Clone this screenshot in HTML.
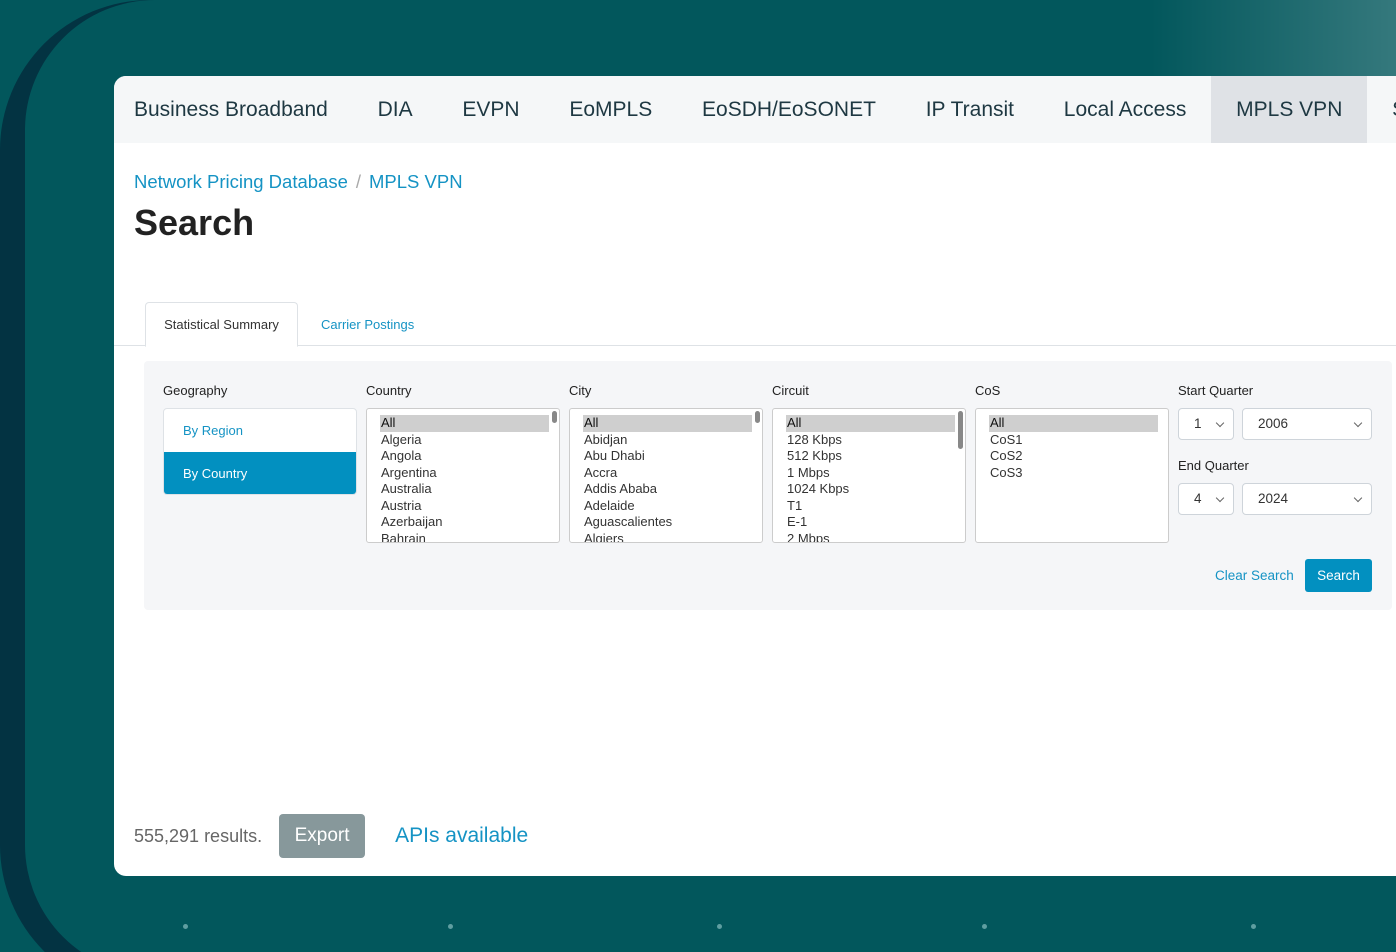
<!DOCTYPE html>
<html><head><style>
*{margin:0;padding:0;box-sizing:border-box}
html,body{width:1396px;height:952px;overflow:hidden}
body{background:#02575c;font-family:"Liberation Sans",sans-serif;position:relative}
.dark{position:absolute;left:0;top:0;width:1500px;height:995px;background:#033342;border-radius:150px}
.teal{position:absolute;left:25px;top:0;width:1500px;height:975px;background:#02575c;border-radius:130px}
.glow{position:absolute;left:1150px;top:0;width:246px;height:80px;background:linear-gradient(90deg,rgba(255,255,255,0),rgba(255,255,255,0.2))}
.dot{position:absolute;top:924px;width:5px;height:5px;border-radius:50%;background:#5f9ea1}
.card{position:absolute;left:114px;top:76px;width:1300px;height:800px;background:#fff;border-radius:12px 0 0 12px;overflow:hidden}
.nav{height:67px;background:#f5f7f8;display:flex;font-size:21px;color:#1e3842}
.nav div{padding:0 24.9px;line-height:67px;white-space:nowrap}
.nav div:first-child{padding-left:20px}
.nav .act{background:#dfe2e6}
.bc{position:absolute;left:20px;top:95px;font-size:18.5px;color:#1593c4}
.bc span{color:#aaa;margin:0 8px}
h1{position:absolute;left:20px;top:126px;font-size:36px;font-weight:bold;color:#222}
.tabs{position:absolute;left:0;top:226px;width:1300px;height:44px;border-bottom:1px solid #dee2e6}
.tab1{position:absolute;left:31px;top:0;width:153px;height:45px;border:1px solid #dee2e6;border-bottom:1px solid #fff;border-radius:4px 4px 0 0;font-size:13px;color:#333;text-align:center;line-height:43px;background:#fff}
.tab2{position:absolute;left:207px;top:0;font-size:13px;color:#1593c4;line-height:45px}
.panel{position:absolute;left:30px;top:285px;width:1248px;height:249px;background:#f5f6f8;border-radius:4px}
.lbl{position:absolute;font-size:13px;color:#222}
.geo{position:absolute;left:19px;top:47px;width:194px;height:87px;border:1px solid #dee2e6;border-radius:4px;background:#fff;overflow:hidden;font-size:13px}
.geo div{height:43px;line-height:43px;padding-left:19px;color:#1593c4}
.geo .on{background:#0290c0;color:#fff}
.lst{position:absolute;top:47px;width:194px;height:135px;border:1px solid #ccc;border-radius:3px;background:#fff;padding:6px 0 0 13px;font-size:13px;color:#333;line-height:16.5px;overflow:hidden}
.lst div:first-child{background:#cfcfcf;margin-right:10px;padding-left:1px;color:#111}
.lst div{padding-left:1px}
.lst .sb{position:absolute;right:2px;top:2px;width:5px;height:12px;background:#888;border-radius:3px;padding:0}
.sel{position:absolute;height:32px;border:1px solid #ced4da;border-radius:4px;background:#fff;font-size:13.5px;color:#333;line-height:30px;padding-left:15px}
.sel:after{content:"";position:absolute;right:10px;top:11px;width:5px;height:5px;border-right:1px solid #666;border-bottom:1px solid #666;transform:rotate(45deg)}
.btn{position:absolute;left:1161px;top:198px;width:67px;height:33px;background:#0290c0;border-radius:3px;color:#fff;font-size:13.5px;text-align:center;line-height:33px}
.clr{position:absolute;left:1071px;top:198px;line-height:33px;font-size:13.5px;color:#1593c4}
.foot{position:absolute;left:20px;top:738px;font-size:18px;color:#666;display:flex;align-items:center}
.exp{margin-left:17px;width:86px;height:44px;background:#87989b;border-radius:4px;color:#fff;font-size:19px;text-align:center;line-height:44px}
.api{margin-left:30px;font-size:21px;color:#1593c4}
</style></head><body>
<div class="dark"></div><div class="teal"></div><div class="glow"></div>
<div class="dot" style="left:183px"></div><div class="dot" style="left:448px"></div><div class="dot" style="left:717px"></div><div class="dot" style="left:982px"></div><div class="dot" style="left:1251px"></div>
<div class="card">
<div class="nav"><div>Business Broadband</div><div>DIA</div><div>EVPN</div><div>EoMPLS</div><div>EoSDH/EoSONET</div><div>IP Transit</div><div>Local Access</div><div class="act">MPLS VPN</div><div>Sites</div></div>
<div class="bc">Network Pricing Database<span>/</span>MPLS VPN</div>
<h1>Search</h1>
<div class="tabs"><div class="tab1">Statistical Summary</div><div class="tab2">Carrier Postings</div></div>
<div class="panel">
<div class="lbl" style="left:19px;top:22px">Geography</div>
<div class="lbl" style="left:222px;top:22px">Country</div>
<div class="lbl" style="left:425px;top:22px">City</div>
<div class="lbl" style="left:628px;top:22px">Circuit</div>
<div class="lbl" style="left:831px;top:22px">CoS</div>
<div class="lbl" style="left:1034px;top:22px">Start Quarter</div>
<div class="lbl" style="left:1034px;top:97px">End Quarter</div>
<div class="geo"><div>By Region</div><div class="on">By Country</div></div>
<div class="lst" style="left:222px"><div>All</div><div>Algeria</div><div>Angola</div><div>Argentina</div><div>Australia</div><div>Austria</div><div>Azerbaijan</div><div>Bahrain</div><div class="sb"></div></div>
<div class="lst" style="left:425px"><div>All</div><div>Abidjan</div><div>Abu Dhabi</div><div>Accra</div><div>Addis Ababa</div><div>Adelaide</div><div>Aguascalientes</div><div>Algiers</div><div class="sb"></div></div>
<div class="lst" style="left:628px"><div>All</div><div>128 Kbps</div><div>512 Kbps</div><div>1 Mbps</div><div>1024 Kbps</div><div>T1</div><div>E-1</div><div>2 Mbps</div><div class="sb" style="height:38px"></div></div>
<div class="lst" style="left:831px"><div>All</div><div>CoS1</div><div>CoS2</div><div>CoS3</div></div>
<div class="sel" style="left:1034px;top:47px;width:56px">1</div>
<div class="sel" style="left:1098px;top:47px;width:130px">2006</div>
<div class="sel" style="left:1034px;top:122px;width:56px">4</div>
<div class="sel" style="left:1098px;top:122px;width:130px">2024</div>
<div class="clr">Clear Search</div><div class="btn">Search</div>
</div>
<div class="foot">555,291 results.<div class="exp">Export</div><div class="api">APIs available</div></div>
</div>
</body></html>
